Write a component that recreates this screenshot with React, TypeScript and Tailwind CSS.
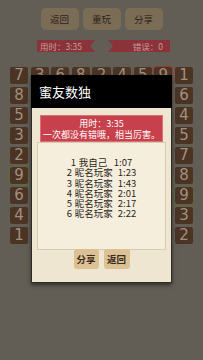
import React from "react";

const grid: number[][] = [
  [7, 3, 6, 8, 2, 4, 5, 9, 1],
  [8, 2, 1, 9, 5, 3, 7, 4, 6],
  [5, 9, 3, 1, 7, 6, 2, 8, 4],
  [3, 1, 2, 7, 4, 9, 6, 8, 5],
  [2, 4, 9, 6, 3, 5, 1, 8, 7],
  [9, 6, 7, 2, 1, 5, 3, 4, 8],
  [6, 5, 8, 4, 9, 1, 7, 2, 9],
  [4, 7, 5, 3, 6, 2, 8, 1, 3],
  [1, 8, 4, 5, 7, 6, 9, 3, 2],
];

const board = [
  ["1", "我自己", "1:07"],
  ["2", "昵名玩家", "1:23"],
  ["3", "昵名玩家", "1:43"],
  ["4", "昵名玩家", "2:01"],
  ["5", "昵名玩家", "2:17"],
  ["6", "昵名玩家", "2:22"],
];

const cjk = { fontFamily: '"Noto Sans CJK SC", "Noto Sans", sans-serif' };

export default function App() {
  return (
    <div
      className="relative w-[203px] h-[360px] bg-[#625e56] overflow-hidden"
      style={cjk}
    >
      {/* top buttons */}
      <div className="flex justify-center gap-[4px] pt-[8px]">
        {["返回", "重玩", "分享"].map((t) => (
          <div
            key={t}
            className="w-[38px] h-[22px] rounded-[5px] bg-[#7b6c56] flex items-center justify-center text-[9.5px] text-[#2c241a]"
          >
            {t}
          </div>
        ))}
      </div>
      {/* ribbons */}
      <div className="flex justify-between pl-[37px] pr-[33px] mt-[10px]">
        <div className="w-[58px] h-[12px] bg-[#8a3439] [clip-path:polygon(0_0,100%_0,92%_50%,100%_100%,0_100%)] flex items-center pl-[3px] text-[8.5px] text-[#c99a9c] leading-none">
          用时：3:35
        </div>
        <div className="w-[62px] h-[12px] bg-[#8a3439] [clip-path:polygon(0_0,100%_0,100%_100%,0_100%,8%_50%)] flex items-center justify-end pr-[7px] text-[8.5px] text-[#c99a9c] leading-none">
          错误：0
        </div>
      </div>
      {/* grid */}
      <div className="grid grid-cols-9 gap-x-[2.5px] gap-y-[3px] ml-[10px] mt-[15px] w-[183px]">
        {grid.flatMap((row, r) =>
          row.map((v, c) => {
            const red = r === 0 && c === 7;
            const green = (r === 5 && c === 0) || (r === 6 && c === 8);
            const hidden = r > 0 && c > 0 && c < 8;
            return (
              <div
                key={`${r}-${c}`}
                className={`h-[17px] rounded-[2px] bg-[#4c3425] flex items-center justify-center text-[15px] text-[#a09080] leading-none ${
                  red
                    ? "outline outline-[1.5px] outline-[#9a3a2e]"
                    : green
                    ? "outline outline-[1.5px] outline-[#5d6a36]"
                    : ""
                }`}
                style={{ fontFamily: '"DejaVu Sans", sans-serif' }}
              >
                {hidden ? "" : v}
              </div>
            );
          })
        )}
      </div>

      {/* dialog */}
      <div className="absolute left-[31px] top-[75px] w-[141px] shadow-[0_2px_4px_rgba(0,0,0,0.5)]">
        <div className="h-[33px] bg-black flex items-center pl-[8px] text-[13px] text-white">
          蜜友数独
        </div>
        <div className="bg-[#efe6d1] border border-[#2e2b26] border-t-0 pt-[7px] pb-[13px] px-[5px]">
          <div className="mx-[3px] h-[27px] bg-[#c8404b] border border-[#d8707a] flex flex-col items-center justify-center text-white text-[9px] leading-[11px]">
            <div>用时：3:35</div>
            <div>一次都没有错哦，相当厉害。</div>
          </div>
          <div className="h-[108px] bg-[#f5eedd] border border-[#d9ccae] flex flex-col items-center pt-[14px] text-[#2a2520] text-[9.5px] leading-[10.3px]">
            {board.map(([n, name, t]) => (
              <div key={n + name} className="flex">
                <span className="w-[8px]">{n}</span>
                <span className={name.length === 3 ? "w-[34px]" : "w-[43px]"}>
                  {name}
                </span>
                <span className={name.length === 3 ? "ml-[1px]" : ""}>{t}</span>
              </div>
            ))}
          </div>
          <div className="flex justify-center gap-[5px] -mt-[1px]">
            <div className="w-[25px] h-[20px] rounded-[3px] bg-[#dcc195] flex items-center justify-center text-[9.5px] font-bold text-[#3a2c1c]">
              分享
            </div>
            <div className="w-[26px] h-[20px] rounded-[3px] bg-[#dcc195] flex items-center justify-center text-[9.5px] font-bold text-[#3a2c1c]">
              返回
            </div>
          </div>
        </div>
      </div>
    </div>
  );
}
